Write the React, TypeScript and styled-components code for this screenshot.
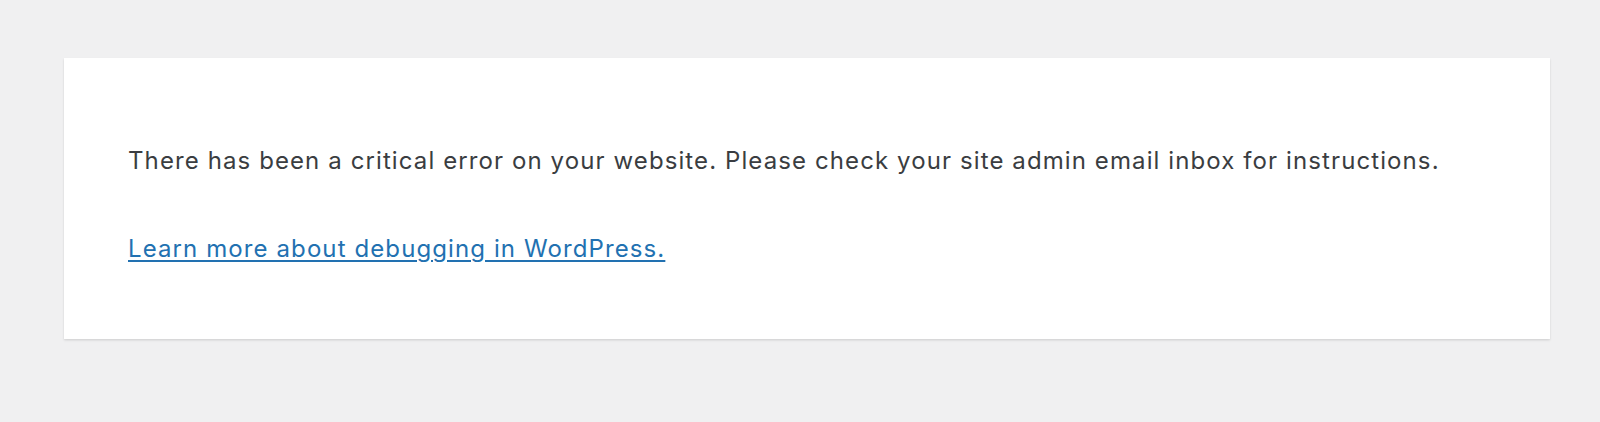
import React from 'react';
import styled, { createGlobalStyle } from 'styled-components';

const GlobalStyle = createGlobalStyle`
  html, body {
    margin: 0;
    padding: 0;
    background: #f0f0f1;
  }
  body {
    font-family: Inter, "Liberation Sans", Arial, sans-serif;
    color: #3c434a;
  }
`;

const Page = styled.div`
  min-height: 422px;
  padding: 58px 50px 0 64px;
  box-sizing: border-box;
`;

const ErrorBox = styled.div`
  width: 1486px;
  height: 281px;
  box-sizing: border-box;
  background: #fff;
  padding: 85px 64px 0 64px;
  box-shadow: 0 1px 2px rgba(0, 0, 0, 0.1), 0 2px 3px rgba(0, 0, 0, 0.04);
`;

const Message = styled.p`
  margin: 0 0 52px;
  font-size: 24px;
  line-height: 36px;
  letter-spacing: 1.1px;
  color: #3a3d41;
`;

const Link = styled.a`
  color: #2271b1;
  text-decoration: underline;
  text-underline-offset: 3px;
  text-decoration-thickness: 1.5px;
`;

function App() {
  return (
    <>
      <GlobalStyle />
      <Page>
        <ErrorBox>
          <Message>
            There has been a critical error on your website. Please check your site admin email inbox for instructions.
          </Message>
          <Message>
            <Link href="#">Learn more about debugging in WordPress.</Link>
          </Message>
        </ErrorBox>
      </Page>
    </>
  );
}

export default App;
